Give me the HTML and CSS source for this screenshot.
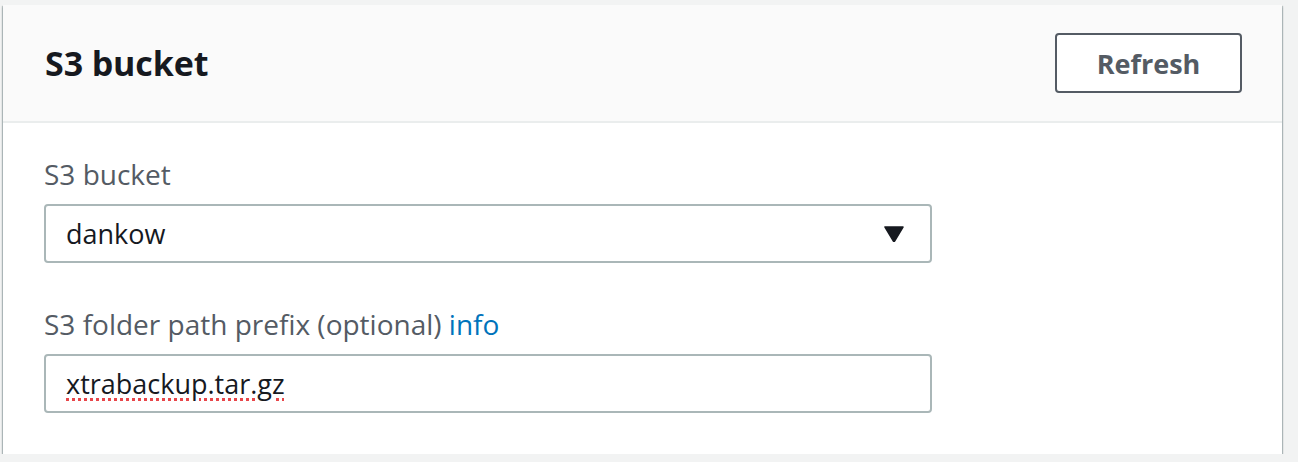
FILE: index.html
```html
<!DOCTYPE html>
<html>
<head>
<meta charset="utf-8">
<link rel="stylesheet" href="styles.css">
</head>
<body>
<div class="panel">
  <div class="panel-header">
    <h2 class="title">S3 bucket</h2>
    <button class="btn">Refresh</button>
  </div>
  <div class="panel-body">
    <div class="field">
      <div class="label">S3 bucket</div>
      <div class="select">
        <span class="value">dankow</span>
        <svg class="caret" width="20" height="16" viewBox="0 0 20 16"><path d="M1 1 L19 1 L10.6 15 Q10 16 9.4 15 Z" fill="#16191f" stroke="#16191f" stroke-width="1.5" stroke-linejoin="round"/></svg>
      </div>
    </div>
    <div class="field">
      <div class="label">S3 folder path prefix (optional) <a class="info">info</a></div>
      <div class="input"><span class="misspelled">xtrabackup.tar.gz</span></div>
    </div>
  </div>
</div>
</body>
</html>
```
FILE: styles.css
```css
html, body {
  margin: 0;
  padding: 0;
  background: #f2f3f3;
}
body {
  padding: 5px 0 0 3px;
  font-family: "Open Sans", "Noto Sans", sans-serif;
}
.panel {
  width: 1279px;
  background: #ffffff;
  box-shadow: 0 2px 2px 0 rgba(0, 28, 36, 0.35), 1px 1px 1px 0 rgba(0, 28, 36, 0.2), -1px 1px 1px 0 rgba(0, 28, 36, 0.2);
}
.panel-header {
  height: 118px;
  box-sizing: border-box;
  background: #fafafa;
  border-bottom: 2px solid #eaeded;
  display: flex;
  align-items: center;
  justify-content: space-between;
  padding: 0 40px 0 42px;
}
.title {
  margin: 0;
  font-size: 34px;
  font-weight: 700;
  color: #16191f;
  letter-spacing: -0.1px;
}
.btn {
  width: 187px;
  height: 60px;
  margin-top: 0;
  border: 2px solid #545b64;
  border-radius: 4px;
  background: #ffffff;
  color: #545b64;
  font-family: inherit;
  font-size: 27px;
  font-weight: 700;
  padding: 0;
}
.panel-body {
  padding: 31px 40px 41px 41px;
  display: flex;
  flex-direction: column;
  gap: 41px;
}
.field {
  display: flex;
  flex-direction: column;
  gap: 10px;
}
.label {
  font-size: 28px;
  line-height: 40px;
  color: #545b64;
}
.info {
  color: #0073bb;
}
.select, .input {
  width: 888px;
  height: 59px;
  box-sizing: border-box;
  border: 2px solid #aab7b8;
  border-radius: 4px;
  display: flex;
  align-items: center;
  padding: 0 26px 0 20px;
  font-size: 27px;
  color: #16191f;
}
.select {
  justify-content: space-between;
}
.value {
  line-height: 40px;
}
.misspelled {
  text-decoration: underline dotted #e8464a;
  text-decoration-thickness: 3px;
  text-underline-offset: 4px;
}
```
